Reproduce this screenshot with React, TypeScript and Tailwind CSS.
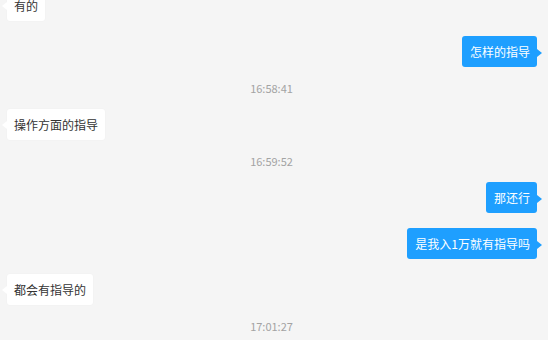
import React from "react";

const font = { fontFamily: '"Microsoft YaHei","Noto Sans CJK SC","Noto Sans",sans-serif' };

function Left({ text, className = "" }: { text: string; className?: string }) {
  return (
    <div className={"flex justify-start pl-[7px] " + className}>
      <div className="relative h-[31px] px-[7px] flex items-center bg-white rounded-[3px] text-[12px] text-[#333] shadow-[0_0_2px_rgba(0,0,0,0.04)]">
        <span className="absolute left-[-5px] top-[12px] w-0 h-0 border-y-[4px] border-y-transparent border-r-[5px] border-r-white" />
        {text}
      </div>
    </div>
  );
}

function Right({ text, className = "" }: { text: string; className?: string }) {
  return (
    <div className={"flex justify-end pr-[11px] " + className}>
      <div className="relative h-[31px] pl-[8px] pr-[7px] flex items-center bg-[#1e9fff] rounded-[3px] text-[12px] text-white">
        {text}
        <span className="absolute right-[-5px] top-[13px] w-0 h-0 border-y-[4px] border-y-transparent border-l-[5px] border-l-[#1e9fff]" />
      </div>
    </div>
  );
}

function Time({ text, className = "" }: { text: string; className?: string }) {
  return (
    <div className={"h-[18px] flex items-center justify-center pr-[5px] text-[11px] text-[#a3a3a3] " + className}>
      <span>{text}</span>
    </div>
  );
}

export default function App() {
  return (
    <div className="w-[548px] h-[340px] bg-[#f5f5f5] overflow-hidden" style={font}>
      <div className="flex flex-col">
        <Left text="有的" className="mt-[-10px]" />
        <Right text="怎样的指导" className="mt-[15px]" />
        <Time text="16:58:41" className="mt-[12px]" />
        <Left text="操作方面的指导" className="mt-[12px]" />
        <Time text="16:59:52" className="mt-[12px]" />
        <Right text="那还行" className="mt-[12px]" />
        <Right text="是我入1万就有指导吗" className="mt-[15px]" />
        <Left text="都会有指导的" className="mt-[15px]" />
        <Time text="17:01:27" className="mt-[12px]" />
      </div>
    </div>
  );
}
